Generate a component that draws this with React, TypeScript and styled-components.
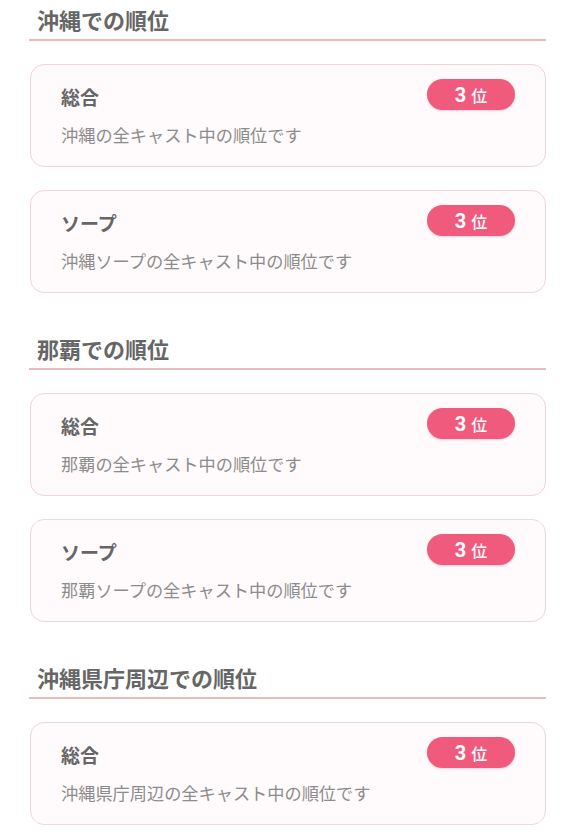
import React from 'react';
import styled, { createGlobalStyle } from 'styled-components';

const GlobalStyle = createGlobalStyle`
  html, body {
    margin: 0;
    padding: 0;
    background: #ffffff;
  }
  body {
    font-family: "Noto Sans CJK JP", "Noto Sans", sans-serif;
  }
`;

const Page = styled.div`
  padding: 4px 30px 20px 29px;
`;

const Section = styled.section`
  margin-bottom: 40px;
`;

const Heading = styled.h2`
  margin: 0 0 23px;
  padding: 0 8px 5px;
  font-size: 22px;
  line-height: 30px;
  font-weight: 700;
  color: #666666;
  border-bottom: 2px solid #e9bcbc;
`;

const CardList = styled.div`
  display: flex;
  flex-direction: column;
  gap: 23px;
`;

const Card = styled.div`
  background: #fffafb;
  border: 1.5px solid #f1d6d6;
  border-radius: 14px;
  padding: 14px 30px 19px 30px;
  margin-left: 1px;
`;

const TitleRow = styled.div`
  display: flex;
  align-items: center;
  justify-content: space-between;
  height: 31px;
`;

const Title = styled.div`
  font-size: 19px;
  font-weight: 700;
  color: #666666;
  padding-top: 3px;
`;

const Badge = styled.div`
  width: 88px;
  height: 31px;
  border-radius: 16px;
  background: #f05a7c;
  color: #ffffff;
  display: flex;
  align-items: center;
  justify-content: center;
  gap: 5px;
  font-weight: 700;
  box-shadow: 0 1px 2px rgba(240, 90, 124, 0.25);
`;

const Rank = styled.span`
  font-family: "Roboto", "Noto Sans", sans-serif;
  font-size: 20px;
  line-height: 1;
`;

const Unit = styled.span`
  font-size: 16px;
  line-height: 1;
  font-weight: 500;
`;

const Desc = styled.div`
  margin-top: 13px;
  font-size: 17.2px;
  line-height: 24px;
  color: #8c8c8c;
`;

type Item = { title: string; desc: string };
type Area = { heading: string; items: Item[] };

const areas: Area[] = [
  {
    heading: '沖縄での順位',
    items: [
      { title: '総合', desc: '沖縄の全キャスト中の順位です' },
      { title: 'ソープ', desc: '沖縄ソープの全キャスト中の順位です' },
    ],
  },
  {
    heading: '那覇での順位',
    items: [
      { title: '総合', desc: '那覇の全キャスト中の順位です' },
      { title: 'ソープ', desc: '那覇ソープの全キャスト中の順位です' },
    ],
  },
  {
    heading: '沖縄県庁周辺での順位',
    items: [{ title: '総合', desc: '沖縄県庁周辺の全キャスト中の順位です' }],
  },
];

const RankCard = ({ title, desc }: Item) => (
  <Card>
    <TitleRow>
      <Title>{title}</Title>
      <Badge>
        <Rank>3</Rank>
        <Unit>位</Unit>
      </Badge>
    </TitleRow>
    <Desc>{desc}</Desc>
  </Card>
);

export default function App() {
  return (
    <>
      <GlobalStyle />
      <Page>
        {areas.map((area) => (
          <Section key={area.heading}>
            <Heading>{area.heading}</Heading>
            <CardList>
              {area.items.map((item) => (
                <RankCard key={item.title} {...item} />
              ))}
            </CardList>
          </Section>
        ))}
      </Page>
    </>
  );
}
